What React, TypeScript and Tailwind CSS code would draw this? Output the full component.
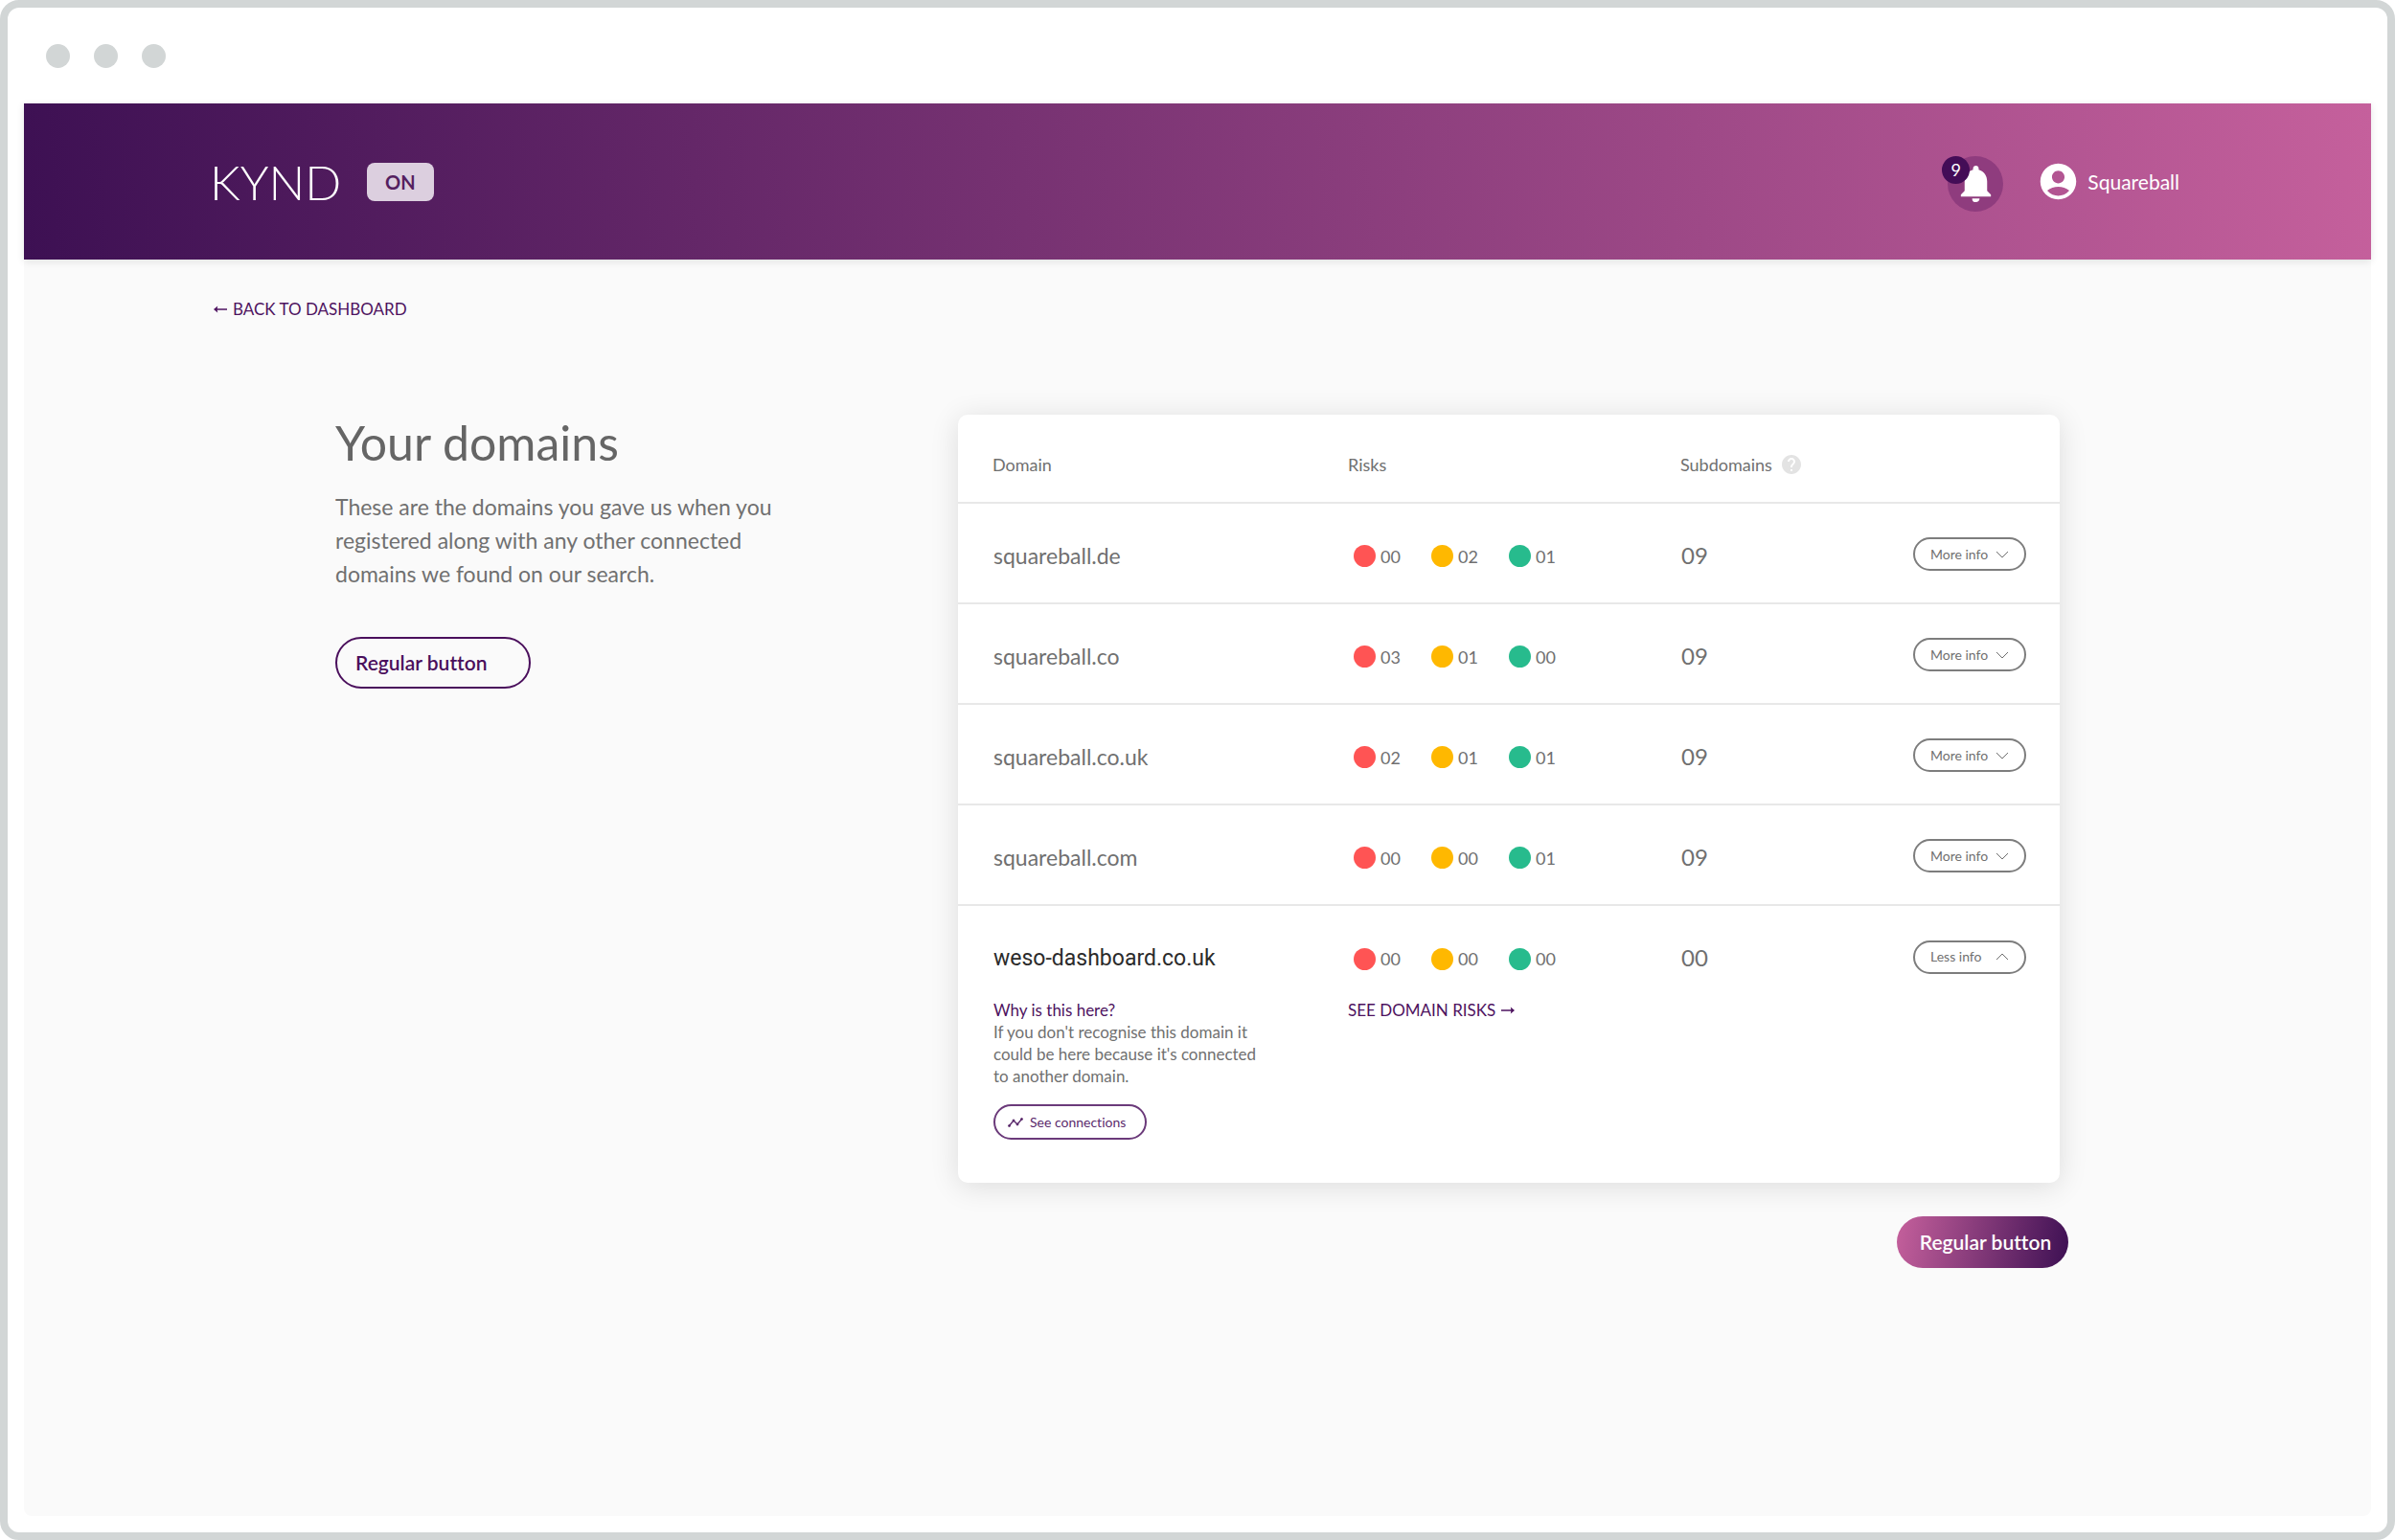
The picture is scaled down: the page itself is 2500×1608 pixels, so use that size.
import { Fragment, useState } from 'react';
import { MdAccountCircle, MdHelp, MdNotifications } from 'react-icons/md';
import clsx from 'clsx';

interface Domain {
  name: string;
  high: string;
  medium: string;
  low: string;
  subdomains: string;
}

const domains: Domain[] = [
  { name: 'squareball.de', high: '00', medium: '02', low: '01', subdomains: '09' },
  { name: 'squareball.co', high: '03', medium: '01', low: '00', subdomains: '09' },
  { name: 'squareball.co.uk', high: '02', medium: '01', low: '01', subdomains: '09' },
  { name: 'squareball.com', high: '00', medium: '00', low: '01', subdomains: '09' },
  { name: 'weso-dashboard.co.uk', high: '00', medium: '00', low: '00', subdomains: '00' },
];

const Arrow = ({ className }: { className?: string }) => (
  <svg viewBox="0 0 14 8" className={clsx('h-2 w-3.5', className)} fill="currentColor" aria-hidden="true">
    <path d="M0 4 4.2.6 3.7 3.3H14v1.4H3.7l.5 2.7z" />
  </svg>
);

const Chevron = ({ up }: { up?: boolean }) => (
  <svg
    viewBox="0 0 14 8"
    className={clsx('h-2 w-3.5', up && 'rotate-180')}
    fill="none"
    stroke="currentColor"
    aria-hidden="true"
  >
    <path d="M1 1l6 6 6-6" />
  </svg>
);

const ConnectionsIcon = () => (
  <svg viewBox="0 0 18 12" className="h-3 w-[18px]" fill="currentColor" stroke="currentColor" aria-hidden="true">
    <path d="M2.5 9.5 7 4l4 4 4.5-5.5" fill="none" strokeWidth="1.4" />
    <circle cx="2.5" cy="9.5" r="1" />
    <circle cx="7" cy="4" r="1" />
    <circle cx="11" cy="8" r="1" />
    <circle cx="15.5" cy="2.5" r="1" />
  </svg>
);

const Risk = ({ color, count }: { color: string; count: string }) => (
  <span className="flex w-[81px] items-center gap-[5px]">
    <span className={clsx('size-[23px] rounded-full', color)} />
    {count}
  </span>
);

const Header = () => (
  <header className="flex h-[163px] items-center justify-between bg-linear-[85deg] from-[#3d1053] to-[#c5609c] pr-[200px] pl-[194px] shadow-[0_2px_8px_rgba(0,0,0,0.1)]">
    <a href="#" className="flex items-center gap-[15px] text-white">
      <span className="min-w-[149px] text-[50px] leading-none font-light">KYND</span>
      <span className="rounded-lg bg-[#dccfdf] px-[19px] py-1.5 text-xl leading-7 font-bold text-[#551f60]">ON</span>
    </a>
    <nav className="flex items-center gap-[39px] text-white">
      <button aria-label="Notifications" className="relative mt-1 flex size-[58px] items-center justify-center rounded-full bg-[#8f3c7e]">
        <MdNotifications className="size-[47px]" />
        <span className="absolute top-0 -left-1.5 flex size-[29px] items-center justify-center rounded-full bg-[#440d57] text-lg leading-none">
          9
        </span>
      </button>
      <a href="#" className="flex items-center gap-2 text-[21px]">
        <MdAccountCircle className="-ml-1 size-[45px]" />
        Squareball
      </a>
    </nav>
  </header>
);

const App = () => {
  const [open, setOpen] = useState('weso-dashboard.co.uk');

  return (
    <div className="bg-white font-[Lato,sans-serif] [font-variant-ligatures:none]">
      <div className="flex min-h-screen flex-col rounded-[20px] border-8 border-[#d2d6d6] p-[17px]">
        <div className="flex h-[83px] gap-[25px] pt-[21px] pl-[23px]">
          <span className="size-[25px] rounded-full bg-[#d2d6d6]" />
          <span className="size-[25px] rounded-full bg-[#d2d6d6]" />
          <span className="size-[25px] rounded-full bg-[#d2d6d6]" />
        </div>

        <div className="flex-1 rounded-b-lg bg-[#fafafa]">
          <Header />

          <a href="#" className="mt-10 ml-[198px] inline-flex items-center gap-1.5 text-[17px] leading-6 text-[#4e1360]">
            <Arrow />
            BACK TO DASHBOARD
          </a>

          <main className="mt-[98px] grid grid-cols-[13fr_23fr] px-[325px]">
            <section>
              <h1 className="text-[50px] leading-[58px] text-[#656565]">Your domains</h1>
              <p className="mt-[21px] max-w-[470px] text-[23px] leading-[35px] text-[#707070]">
                These are the domains you gave us when you registered along with any other connected domains we found on our
                search.
              </p>
              <button className="mt-12 h-[54px] w-[204px] rounded-full border-2 border-[#4a0f5c] pl-[19px] text-left text-[21px] font-semibold text-[#4a0f5c]">
                Regular button
              </button>
            </section>

            <section>
              <div className="rounded-[10px] bg-white shadow-[0_4px_30px_rgba(0,0,0,0.12)]">
                <table className="w-full table-fixed text-left text-[#707070]">
                  <colgroup>
                    <col className="w-[371px]" />
                    <col className="w-[347px]" />
                    <col />
                    <col className="w-[190px]" />
                  </colgroup>
                  <thead>
                    <tr className="h-[92px] text-lg">
                      <th className="pt-3 pl-9 font-normal">Domain</th>
                      <th className="pt-3 pl-9 font-normal">Risks</th>
                      <th className="pt-3 pl-9 font-normal">
                        <span className="flex items-center gap-2">
                          Subdomains
                          <MdHelp className="size-6 text-[#e3e3e3]" />
                        </span>
                      </th>
                      <th aria-label="Details" />
                    </tr>
                  </thead>
                  <tbody>
                    {domains.map((domain) => {
                      const isOpen = open === domain.name;
                      return (
                        <Fragment key={domain.name}>
                          <tr className="h-[105px] border-t-2 border-[#e8e8e8]">
                            <td
                              className={clsx(
                                'pt-1.5 pl-[37px] text-[23px]',
                                isOpen && 'font-[Roboto,sans-serif] text-[#2b2b2b]',
                              )}
                            >
                              {domain.name}
                            </td>
                            <td className="pt-1.5 pl-[42px] text-lg">
                              <span className="flex">
                                <Risk color="bg-[#ff5454]" count={domain.high} />
                                <Risk color="bg-[#ffb800]" count={domain.medium} />
                                <Risk color="bg-[#27bb8d]" count={domain.low} />
                              </span>
                            </td>
                            <td className="pt-1 pl-[37px] text-2xl">{domain.subdomains}</td>
                            <td className="pt-0.5 pr-[35px]">
                              <button
                                aria-expanded={isOpen}
                                onClick={() => setOpen(isOpen ? '' : domain.name)}
                                className="ml-auto flex h-[35px] w-[118px] items-center justify-between rounded-full border-2 border-[#7d7d7d] px-4 text-sm"
                              >
                                {isOpen ? 'Less info' : 'More info'}
                                <Chevron up={isOpen} />
                              </button>
                            </td>
                          </tr>
                          {isOpen && (
                            <tr className="align-top text-[17px] leading-[23px]">
                              <td className="pb-[45px] pl-[37px]">
                                <p className="-mt-[7px] max-w-[290px]">
                                  <strong className="block font-normal text-[#4e1360]">Why is this here?</strong>
                                  If you don't recognise this domain it could be here because it's connected to another domain.
                                </p>
                                <button className="mt-[18px] flex h-[37px] w-40 items-center gap-1.5 rounded-full border-2 border-[#6b3a7a] pl-3 text-sm text-[#5b2a6c]">
                                  <ConnectionsIcon />
                                  See connections
                                </button>
                              </td>
                              <td className="pl-9">
                                <a href="#" className="-mt-[7px] flex items-center gap-1.5 text-[#4e1360]">
                                  SEE DOMAIN RISKS
                                  <Arrow className="rotate-180" />
                                </a>
                              </td>
                              <td colSpan={2} />
                            </tr>
                          )}
                        </Fragment>
                      );
                    })}
                  </tbody>
                </table>
              </div>
              <button className="-mr-[9px] mt-[35px] ml-auto block h-[54px] w-[179px] rounded-full bg-linear-[100deg] from-[#c5609c] to-[#3d1053] pl-1.5 text-[21px] font-semibold text-white">
                Regular button
              </button>
            </section>
          </main>
        </div>
      </div>
    </div>
  );
};

export default App;
